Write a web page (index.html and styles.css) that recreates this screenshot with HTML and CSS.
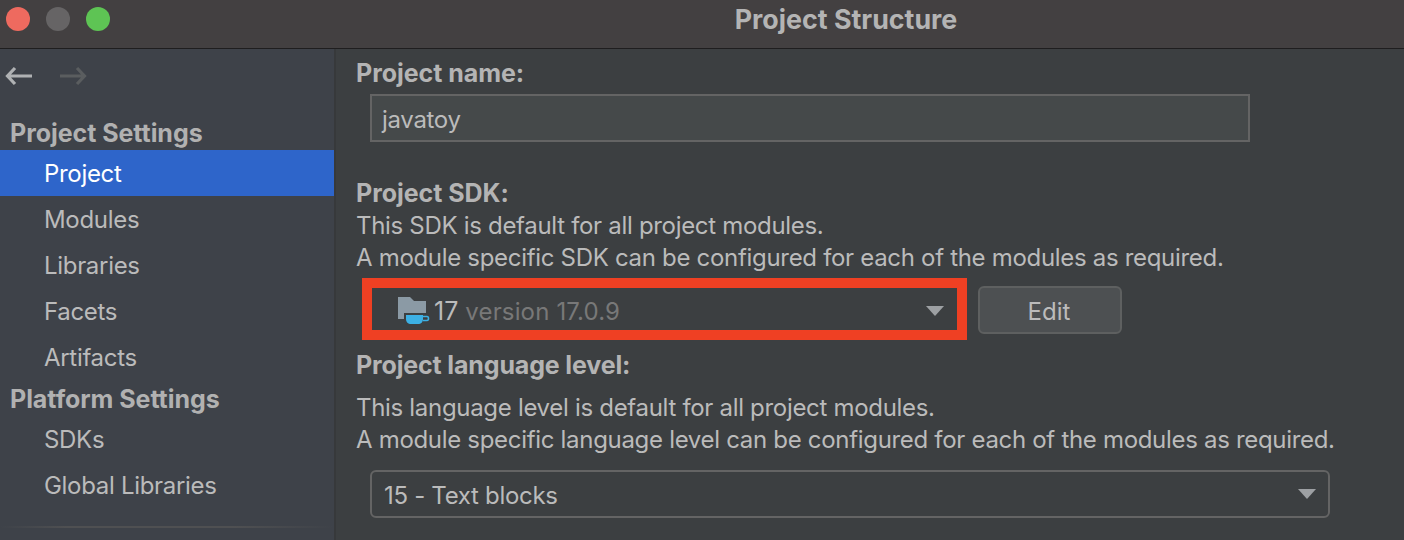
FILE: index.html
```html
<!DOCTYPE html>
<html lang="en">
<head>
    <meta charset="UTF-8">
    <title>Project Structure</title>
    <link rel="stylesheet" href="styles.css">
</head>
<body>
    <div class="titlebar">
        <div class="lights">
            <span class="light red"></span>
            <span class="light gray"></span>
            <span class="light green"></span>
        </div>
        <div class="title">Project Structure</div>
    </div>
    <div class="main">
        <div class="side">
            <div class="arrows">
                <svg width="28" height="20" viewBox="0 0 28 20"><path d="M2 10H27M10 2L2.5 10L10 18" fill="none" stroke="#afb1b3" stroke-width="3.2"/></svg>
                <svg width="28" height="20" viewBox="0 0 28 20"><path d="M0 10H25M17 2L24.5 10L17 18" fill="none" stroke="#5a5d5f" stroke-width="3.2"/></svg>
            </div>
            <div class="group first">Project Settings</div>
            <ul class="items">
                <li class="on">Project</li>
                <li>Modules</li>
                <li>Libraries</li>
                <li>Facets</li>
                <li>Artifacts</li>
            </ul>
            <div class="group second">Platform Settings</div>
            <ul class="items">
                <li>SDKs</li>
                <li>Global Libraries</li>
            </ul>
            <div class="side-line"></div>
        </div>
        <div class="content">
            <div class="label">Project name:</div>
            <div class="namebox">javatoy</div>
            <div class="label sdk">Project SDK:</div>
            <p class="note">This SDK is default for all project modules.</p>
            <p class="note">A module specific SDK can be configured for each of the modules as required.</p>
            <div class="sdk-row">
                <div class="redbox">
                    <svg class="jdk" width="32" height="30" viewBox="0 0 32 30">
                        <path d="M0 1H12L16 5H28V23H0Z" fill="#8b9aa5"/>
                        <path d="M6 17H29V24C29 27 26 30 22 30H13C9 30 6 27 6 24Z" fill="#3c3f41"/>
                        <path d="M8 19H25V23C25 26 23 28 20 28H13C10 28 8 26 8 23Z" fill="#3cb0e4"/>
                        <path d="M25 20.500H29C31 20.500 31 24.500 29 24.500H25" fill="none" stroke="#3cb0e4" stroke-width="1.6"/>
                    </svg>
                    <span class="ver-num">17</span>
                    <span class="ver-text">version 17.0.9</span>
                    <span class="caret"></span>
                </div>
                <div class="edit">Edit</div>
            </div>
            <div class="label level">Project language level:</div>
            <p class="note">This language level is default for all project modules.</p>
            <p class="note">A module specific language level can be configured for each of the modules as required.</p>
            <div class="combo">
                <span class="combo-text">15 - Text blocks</span>
                <span class="caret"></span>
            </div>
        </div>
    </div>
</body>
</html>
```

FILE: styles.css
```css
* {
    margin: 0;
    padding: 0;
    box-sizing: border-box;
    list-style: none;
}
html, body {
    height: 540px;
    overflow: hidden;
}
body {
    background: #3c3f41;
    color: #bbbbbb;
    font-family: Inter, "Liberation Sans", sans-serif;
    font-size: 24px;
    letter-spacing: -0.31px;
}
.titlebar {
    height: 49px;
    background: #434041;
    border-bottom: 1px solid #1f1e1f;
    display: flex;
    align-items: center;
    padding-bottom: 10px;
}
.lights {
    display: flex;
    gap: 16px;
    padding-left: 6px;
}
.light {
    width: 24px;
    height: 24px;
    border-radius: 50%;
}
.red { background: #ee6a5f; }
.gray { background: #666465; }
.green { background: #5ec454; }
.title {
    flex: 1;
    text-align: center;
    font-size: 26.8px;
    font-weight: 700;
    letter-spacing: 0;
    color: #b4b4b4;
    padding-left: 178px;
}
.main {
    display: flex;
    height: 491px;
}
.side {
    width: 336px;
    background: #3e4249;
    border-right: 2px solid #37393b;
    flex-shrink: 0;
}
.arrows {
    display: flex;
    gap: 27px;
    padding: 17px 0 0 5px;
    height: 70px;
}
.group {
    height: 32px;
    line-height: 32px;
    padding-left: 10px;
    font-size: 25px;
    font-weight: 700;
    letter-spacing: -0.05px;
    color: #b1b1b1;
}
.first {
    height: 31px;
    line-height: 28px;
}
.second {
    height: 36px;
    line-height: 38px;
}
.items li {
    height: 46px;
    line-height: 48px;
    padding-left: 44px;
}
.items li.on {
    background: #2e65ca;
    color: #ffffff;
}
.side-line {
    height: 2px;
    margin-top: 18px;
    background: linear-gradient(to right, #3e4249, #4f5052 20%, #4f5052 70%, #3e4249);
}
.content {
    flex: 1;
    padding: 8px 0 0 20px;
}
.label {
    font-size: 25px;
    font-weight: 700;
    letter-spacing: -0.05px;
    height: 32px;
    line-height: 32px;
    color: #b4b4b4;
}
.namebox {
    width: 880px;
    height: 48px;
    line-height: 47px;
    margin: 5px 0 0 14px;
    padding-left: 10px;
    background: #45494a;
    border: 2px solid #646464;
}
.sdk {
    margin-top: 35px;
}
.note {
    height: 32px;
    line-height: 34px;
}
.sdk-row {
    display: flex;
    align-items: center;
    gap: 11px;
    margin: 5px 0 0 6px;
}
.redbox {
    width: 605px;
    height: 62px;
    border: 10px solid #ef4023;
    display: flex;
    align-items: center;
    padding: 0 13px 0 26px;
}
.redbox .caret {
    margin-top: 4px;
}
.jdk {
    margin-top: 4px;
    margin-right: 4px;
    flex-shrink: 0;
}
.ver-num {
    font-size: 25px;
    letter-spacing: 0;
    margin: 4px 7px 0 0;
}
.ver-text {
    color: #787878;
    letter-spacing: 0.15px;
    margin-top: 4px;
    flex: 1;
}
.caret {
    width: 0;
    height: 0;
    border-left: 9px solid transparent;
    border-right: 9px solid transparent;
    border-top: 10px solid #9da0a3;
}
.edit {
    width: 144px;
    height: 48px;
    line-height: 48px;
    text-align: center;
    background: #4d5052;
    border: 2px solid #5e6060;
    border-radius: 6px;
    margin-top: 1px;
    letter-spacing: 0;
    padding-right: 2px;
}
.level {
    margin-top: 9px;
    letter-spacing: -0.15px;
}
.level + .note {
    margin-top: 10px;
}
.combo {
    width: 960px;
    height: 48px;
    margin: 15px 0 0 14px;
    padding: 0 12px 0 12px;
    border: 2px solid #646464;
    border-radius: 6px;
    display: flex;
    align-items: center;
    justify-content: space-between;
}
.combo-text {
    margin-top: 3px;
}
```
